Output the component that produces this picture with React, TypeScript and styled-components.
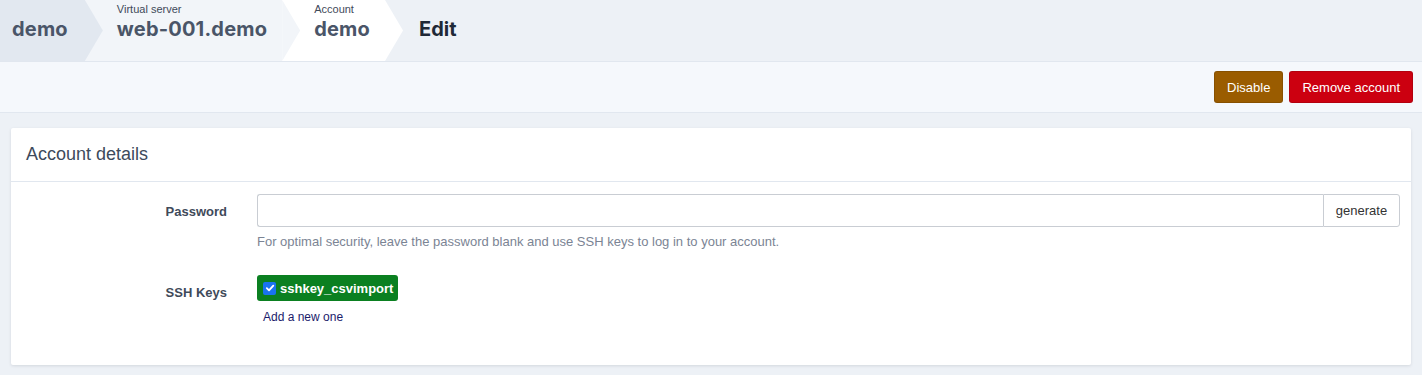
import React from "react";
import styled, { createGlobalStyle } from "styled-components";

const GlobalStyle = createGlobalStyle`
  html, body {
    margin: 0;
    padding: 0;
    background: #edf1f6;
    font-family: "Liberation Sans", Arial, sans-serif;
    color: #3f4a5a;
  }
  * { box-sizing: border-box; }
`;

const Breadcrumbs = styled.nav`
  display: flex;
  align-items: stretch;
  height: 62px;
  background: #edf1f6;
  border-bottom: 1px solid #e1e7ef;
  font-family: Inter, "Noto Sans", sans-serif;
`;

const Crumb = styled.div<{ $bg: string; $first?: boolean; $z: number }>`
  position: relative;
  z-index: ${(p) => p.$z};
  display: flex;
  flex-direction: column;
  justify-content: flex-start;
  padding: ${(p) => (p.$first ? "17px 17px 0 12px" : "3px 15px 0 32px")};
  background: ${(p) => p.$bg};
  color: #4a5568;

  &::after {
    content: "";
    position: absolute;
    top: 0;
    right: -18px;
    width: 18px;
    height: 100%;
    background: ${(p) => p.$bg};
    clip-path: polygon(0 0, 100% 50%, 0 100%);
  }
`;

const CrumbLabel = styled.span`
  font-size: 11px;
  line-height: 13px;
  font-weight: 400;
  color: #3f4a5a;
  margin-bottom: 1px;
  font-family: "Liberation Sans", Arial, sans-serif;
`;

const CrumbValue = styled.span`
  font-size: 20px;
  font-weight: 700;
  letter-spacing: 0.2px;
  line-height: 24px;
`;

const Current = styled.div`
  padding: 17px 0 0 34px;
  font-size: 20px;
  line-height: 24px;
  font-weight: 700;
  color: #1f2937;
`;

const ActionBar = styled.div`
  display: flex;
  justify-content: flex-end;
  align-items: center;
  gap: 6px;
  height: 51px;
  padding: 0 9px;
  background: #f5f8fc;
  border-bottom: 1px solid #e1e7ef;
`;

const ActionButton = styled.button<{ $bg: string }>`
  height: 32px;
  padding: 0 12px;
  border: 1px solid rgba(0, 0, 0, 0.12);
  border-radius: 3px;
  background: ${(p) => p.$bg};
  color: #fff;
  font-family: "Liberation Sans", Arial, sans-serif;
  font-size: 13px;
  cursor: pointer;
`;

const Page = styled.main`
  padding: 15px 11px 10px;
`;

const Card = styled.section`
  background: #fff;
  border-radius: 2px;
  box-shadow: 0 1px 3px rgba(30, 41, 59, 0.12);
`;

const CardHeader = styled.h2`
  margin: 0;
  height: 54px;
  display: flex;
  align-items: center;
  padding: 0 15px;
  font-size: 18px;
  font-weight: 400;
  color: #3d4a5c;
  border-bottom: 1px solid #e1e7ef;
`;

const CardBody = styled.div`
  display: grid;
  grid-template-columns: 216px 1fr;
  column-gap: 30px;
  row-gap: 26px;
  padding: 12px 11px 41px 0;
`;

const Label = styled.label<{ $top: number }>`
  text-align: right;
  font-size: 13px;
  font-weight: 700;
  color: #3f4a5a;
  padding-top: ${(p) => p.$top}px;
`;

const Field = styled.div`
  display: flex;
  flex-direction: column;
`;

const InputGroup = styled.div`
  display: flex;
  height: 33px;
`;

const TextInput = styled.input`
  flex: 1;
  border: 1px solid #c9cdd3;
  border-right: none;
  border-radius: 3px 0 0 3px;
  padding: 0 8px;
  font-size: 13px;
  outline: none;
`;

const AddonButton = styled.button`
  width: 77px;
  border: 1px solid #c9cdd3;
  border-radius: 0 3px 3px 0;
  background: #fff;
  color: #333;
  font-family: "Liberation Sans", Arial, sans-serif;
  font-size: 13px;
`;

const Help = styled.p`
  margin: 7px 0 0;
  font-size: 13px;
  color: #7b8494;
`;

const KeyChip = styled.label`
  align-self: flex-start;
  display: inline-flex;
  align-items: center;
  gap: 4px;
  height: 26px;
  padding: 0 5px 0 6px;
  border-radius: 3px;
  background: #0b8021;
  color: #fff;
  font-size: 13px;
  font-weight: 700;
`;

const Check = styled.span`
  width: 13px;
  height: 13px;
  border-radius: 2px;
  background: #1a73f0;
  display: inline-flex;
  align-items: center;
  justify-content: center;
`;

const AddLink = styled.a`
  margin: 9px 0 0 6px;
  font-size: 12px;
  color: #1b1b6b;
  text-decoration: none;
`;

export default function App() {
  return (
    <>
      <GlobalStyle />
      <Breadcrumbs>
        <Crumb $bg="#e2e8f0" $first $z={3}>
          <CrumbValue>demo</CrumbValue>
        </Crumb>
        <Crumb $bg="#f2f5f9" $z={2}>
          <CrumbLabel>Virtual server</CrumbLabel>
          <CrumbValue>web-001.demo</CrumbValue>
        </Crumb>
        <Crumb $bg="#ffffff" $z={1}>
          <CrumbLabel>Account</CrumbLabel>
          <CrumbValue>demo</CrumbValue>
        </Crumb>
        <Current>Edit</Current>
      </Breadcrumbs>
      <ActionBar>
        <ActionButton $bg="#9a5c00">Disable</ActionButton>
        <ActionButton $bg="#cc0010">Remove account</ActionButton>
      </ActionBar>
      <Page>
        <Card>
          <CardHeader>Account details</CardHeader>
          <CardBody>
            <Label $top={10}>Password</Label>
            <Field>
              <InputGroup>
                <TextInput type="text" />
                <AddonButton>generate</AddonButton>
              </InputGroup>
              <Help>
                For optimal security, leave the password blank and use SSH keys to log in to your account.
              </Help>
            </Field>
            <Label $top={10}>SSH Keys</Label>
            <Field>
              <KeyChip>
                <Check>
                  <svg width="10" height="10" viewBox="0 0 10 10">
                    <path d="M1.8 5.2 L4 7.4 L8.3 2.6" fill="none" stroke="#fff" strokeWidth="1.8" strokeLinecap="round" strokeLinejoin="round" />
                  </svg>
                </Check>
                sshkey_csvimport
              </KeyChip>
              <AddLink href="#">Add a new one</AddLink>
            </Field>
          </CardBody>
        </Card>
      </Page>
    </>
  );
}
